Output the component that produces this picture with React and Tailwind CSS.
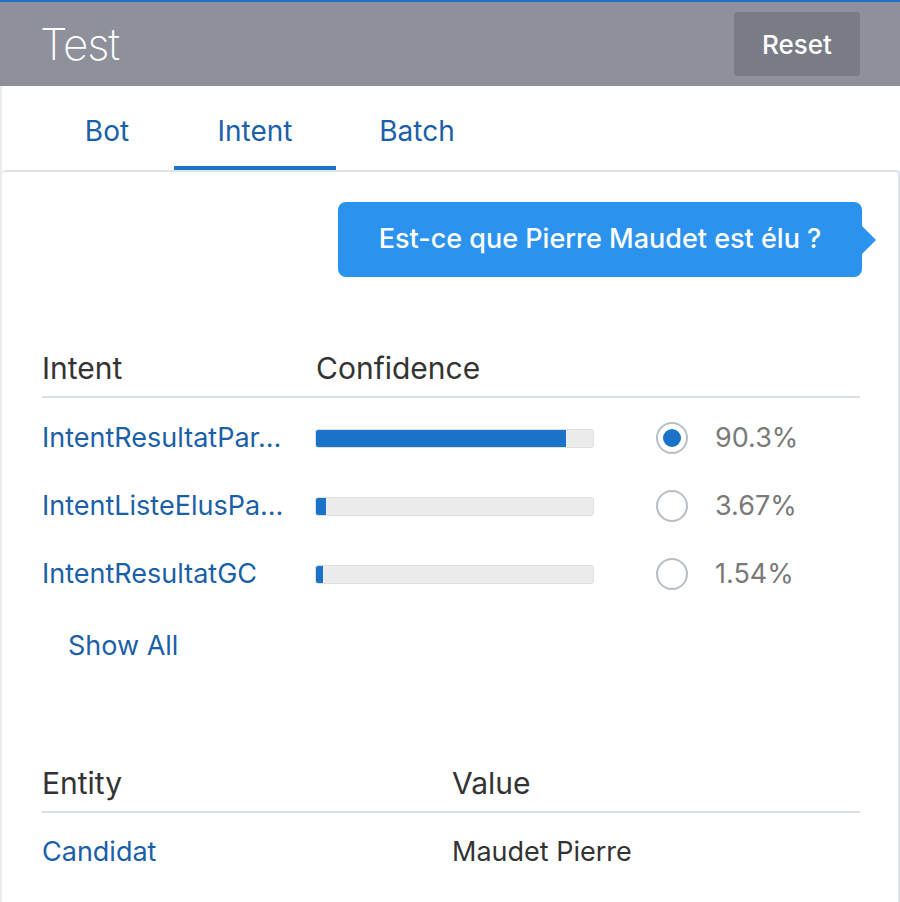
import React from 'react';

const intents = [
  { name: 'IntentResultatPar…', value: 90.3, label: '90.3%', selected: true },
  { name: 'IntentListeElusPa…', value: 3.67, label: '3.67%', selected: false },
  { name: 'IntentResultatGC', value: 1.54, label: '1.54%', selected: false },
];

function Radio({ checked }) {
  return (
    <div className="w-8 h-8 rounded-full border-2 border-[#b7bec6] flex items-center justify-center">
      {checked && <div className="w-[18px] h-[18px] rounded-full bg-[#1a73c8]" />}
    </div>
  );
}

export default function App() {
  return (
    <div
      className="w-[900px] h-[902px] bg-white border-t-2 border-[#1a73c8] overflow-hidden flex flex-col"
      style={{ fontFamily: 'Inter, "Liberation Sans", sans-serif' }}
    >
      {/* Header */}
      <div className="h-[84px] bg-[#8e909b] flex items-center justify-between pl-[40px] pr-[40px] shrink-0">
        <h1 className="text-[44px] font-extralight text-white tracking-tight">Test</h1>
        <button className="h-16 w-[126px] rounded bg-[#797b85] text-white text-[26px] font-medium">
          Reset
        </button>
      </div>

      <div className="flex-1 border-l-2 border-[#ececec] flex flex-col">
        {/* Tabs */}
        <div className="flex h-[85px] pl-[38px] shrink-0">
          <div className="w-[134px] flex items-center justify-center text-[28px] text-[#1a5fa8] pt-[5px]">Bot</div>
          <div className="w-[162px] flex items-center justify-center text-[28px] text-[#1a5fa8] border-b-[5px] border-[#1a73c8] pt-[10px]">
            Intent
          </div>
          <div className="w-[162px] flex items-center justify-center text-[28px] text-[#1a5fa8] pt-[5px]">Batch</div>
        </div>

        {/* Card */}
        <div className="flex-1 border-t-2 border-r-2 border-[#dde3ea] rounded-t-[4px] -mt-[1px] pl-[40px] pr-[38px]">
          {/* Bubble */}
          <div className="flex justify-end pt-[30px] -mr-[2px]">
            <div className="relative h-[75px] w-[524px] rounded-lg bg-[#2b93ee] text-white text-[27px] font-medium flex items-center justify-center">
              Est-ce que Pierre Maudet est élu ?
              <div className="absolute -right-[14px] top-1/2 -translate-y-1/2 w-0 h-0 border-y-[14px] border-y-transparent border-l-[14px] border-l-[#2b93ee]" />
            </div>
          </div>

          {/* Intent table */}
          <div className="mt-[67px]">
            <div className="flex items-end h-[54px] border-b-2 border-[#d8e0e8] pb-[10px] text-[30px] leading-[36px] text-[#333]">
              <div className="w-[274px]">Intent</div>
              <div>Confidence</div>
            </div>
            <div className="pt-[6px]">
              {intents.map((it) => (
                <div key={it.name} className="flex items-center h-[68px] text-[27px]">
                  <div className="w-[273px] text-[#1a5fa8] whitespace-nowrap">{it.name}</div>
                  <div className="w-[279px] h-[19px] rounded-[3px] bg-[#ececec] border border-[#dde1e5] overflow-hidden">
                    <div className="h-full bg-[#1a73c8]" style={{ width: `${Math.max(it.value, 2.5)}%` }} />
                  </div>
                  <div className="ml-[62px]">
                    <Radio checked={it.selected} />
                  </div>
                  <div className="ml-[27px] text-[#7a7a7a]">{it.label}</div>
                </div>
              ))}
            </div>
            <div className="pl-[26px] mt-[18px] text-[27px] leading-[40px] text-[#1a5fa8]">Show All</div>
          </div>

          {/* Entity table */}
          <div className="mt-[94px]">
            <div className="flex items-end h-[53px] border-b-2 border-[#d8e0e8] pb-[10px] text-[30px] leading-[36px] text-[#333]">
              <div className="w-[410px]">Entity</div>
              <div>Value</div>
            </div>
            <div className="flex items-center h-[78px] text-[27px]">
              <div className="w-[410px] text-[#1a5fa8]">Candidat</div>
              <div className="text-[#333]">Maudet Pierre</div>
            </div>
          </div>
        </div>
      </div>
    </div>
  );
}
